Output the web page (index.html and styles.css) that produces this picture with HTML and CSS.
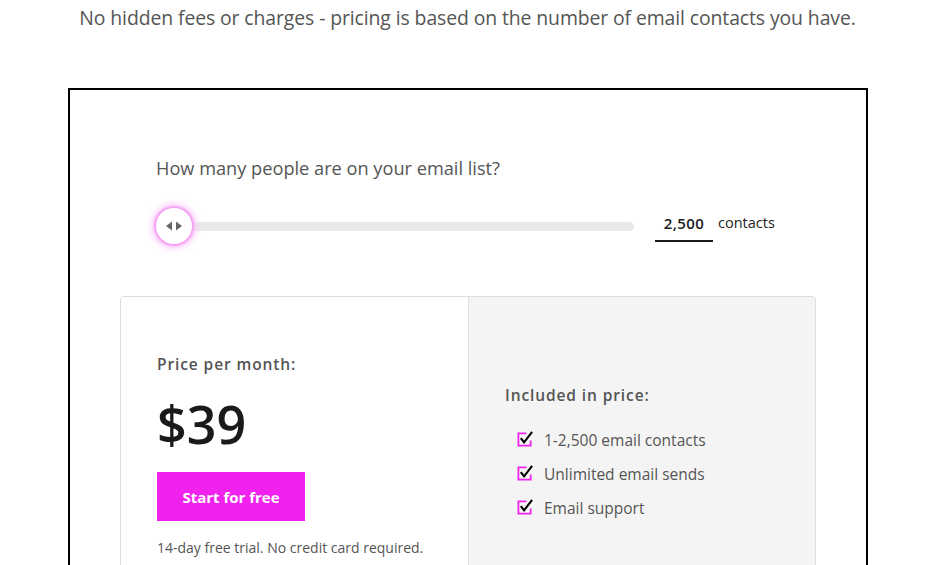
FILE: index.html
```html
<!DOCTYPE html>
<html>
<head>
<meta charset="utf-8">
<link rel="stylesheet" href="styles.css">
</head>
<body>
<p class="intro">No hidden fees or charges - pricing is based on the number of email contacts you have.</p>
<section class="box">
  <p class="question">How many people are on your email list?</p>
  <div class="slider-row">
    <div class="slider">
      <div class="track"></div>
      <div class="thumb">
        <svg width="18" height="10" viewBox="0 0 18 10"><polygon points="1,5 7,0.5 7,9.5" fill="#666"/><polygon points="17,5 11,0.5 11,9.5" fill="#666"/></svg>
      </div>
    </div>
    <div class="count"><span class="num">2,500</span><span class="unit">contacts</span></div>
  </div>
  <div class="card">
    <div class="left">
      <p class="label">Price per month:</p>
      <p class="price">$39</p>
      <a class="btn">Start for free</a>
      <p class="trial">14-day free trial. No credit card required.</p>
    </div>
    <div class="right">
      <p class="label">Included in price:</p>
      <ul class="list">
        <li><svg class="chk" width="17" height="17" viewBox="0 0 18 18"><path d="M10 3.5H1.5V16.5H14.5V11" fill="none" stroke="#f122ee" stroke-width="1.9"/><path d="M4 8.5L7.5 13L16 2" fill="none" stroke="#000" stroke-width="2.2"/></svg>1-2,500 email contacts</li>
        <li><svg class="chk" width="17" height="17" viewBox="0 0 18 18"><path d="M10 3.5H1.5V16.5H14.5V11" fill="none" stroke="#f122ee" stroke-width="1.9"/><path d="M4 8.5L7.5 13L16 2" fill="none" stroke="#000" stroke-width="2.2"/></svg>Unlimited email sends</li>
        <li><svg class="chk" width="17" height="17" viewBox="0 0 18 18"><path d="M10 3.5H1.5V16.5H14.5V11" fill="none" stroke="#f122ee" stroke-width="1.9"/><path d="M4 8.5L7.5 13L16 2" fill="none" stroke="#000" stroke-width="2.2"/></svg>Email support</li>
      </ul>
    </div>
  </div>
</section>
</body>
</html>
```
FILE: styles.css
```css
* { box-sizing: border-box; }
html, body { margin: 0; padding: 0; background: #fff; overflow: hidden; height: 565px; }
body { font-family: "Open Sans", "Noto Sans", sans-serif; color: #555; }
p { margin: 0; }
.intro {
  text-align: center;
  font-size: 19.4px;
  line-height: 24px;
  padding-top: 6px;
  padding-left: 6px;
  color: #555;
  letter-spacing: -0.1px;
}
.box {
  margin: 58px 0 0 68px;
  width: 800px;
  height: 600px;
  border: 2px solid #000;
  border-bottom: none;
  padding: 66px 50px 0 50px;
}
.question {
  font-size: 18.2px;
  line-height: 24px;
  margin-left: 36px;
  color: #555;
}
.slider-row {
  display: flex;
  align-items: flex-start;
  margin-top: 28px;
  margin-left: 36px;
}
.slider {
  position: relative;
  width: 478px;
  height: 36px;
  display: flex;
  align-items: center;
}
.track {
  margin-left: 18px;
  width: 460px;
  height: 9px;
  background: #e9e9e9;
  border-radius: 5px;
}
.thumb {
  position: absolute;
  left: 0;
  top: 0;
  width: 36px;
  height: 36px;
  border-radius: 50%;
  background: #fff;
  box-shadow: 0 0 2px 2px #f49cf3, 0 0 7px 4px #fbc8fa;
  display: flex;
  align-items: center;
  justify-content: center;
}
.count {
  display: flex;
  align-items: flex-start;
  margin-left: 21px;
  margin-top: 3px;
}
.num {
  display: inline-block;
  width: 58px;
  text-align: center;
  font-size: 15px;
  font-weight: 600;
  color: #1a1a1a;
  line-height: 20px;
  padding: 2px 0 7px;
  border-bottom: 2px solid #1a1a1a;
  letter-spacing: 0.4px;
}
.unit {
  margin-left: 5px;
  font-size: 14.5px;
  color: #222;
  padding-top: 2px;
  line-height: 20px;
}
.card {
  margin-top: 52px;
  display: flex;
  width: 696px;
  height: 300px;
  border: 1px solid #ddd;
  border-radius: 4px;
  overflow: hidden;
}
.left {
  width: 348px;
  background: #fff;
  padding: 57px 0 0 36px;
  border-right: 1px solid #e2e2e2;
}
.right {
  flex: 1;
  background: #f4f4f4;
  padding: 88px 0 0 36px;
}
.label {
  font-size: 15.5px;
  font-weight: 600;
  letter-spacing: 0.9px;
  line-height: 20px;
  color: #555;
}
.price {
  margin-top: 20px;
  font-size: 52px;
  line-height: 60px;
  font-weight: 600;
  color: #1a1a1a;
  letter-spacing: 0px;
}
.btn {
  display: flex;
  align-items: center;
  justify-content: center;
  margin-top: 18px;
  width: 148px;
  height: 49px;
  background: #f122ee;
  color: #fff;
  font-weight: 700;
  font-size: 15px;
}
.trial {
  margin-top: 18px;
  font-size: 14px;
  line-height: 18px;
  color: #555;
}
.list {
  list-style: none;
  margin: 18px 0 0 12px;
  padding: 0;
}
.list li {
  display: flex;
  align-items: center;
  height: 34px;
  font-size: 15.5px;
  color: #555;
}
.chk { margin-right: 10px; margin-top: -3px; flex: none; }
```
